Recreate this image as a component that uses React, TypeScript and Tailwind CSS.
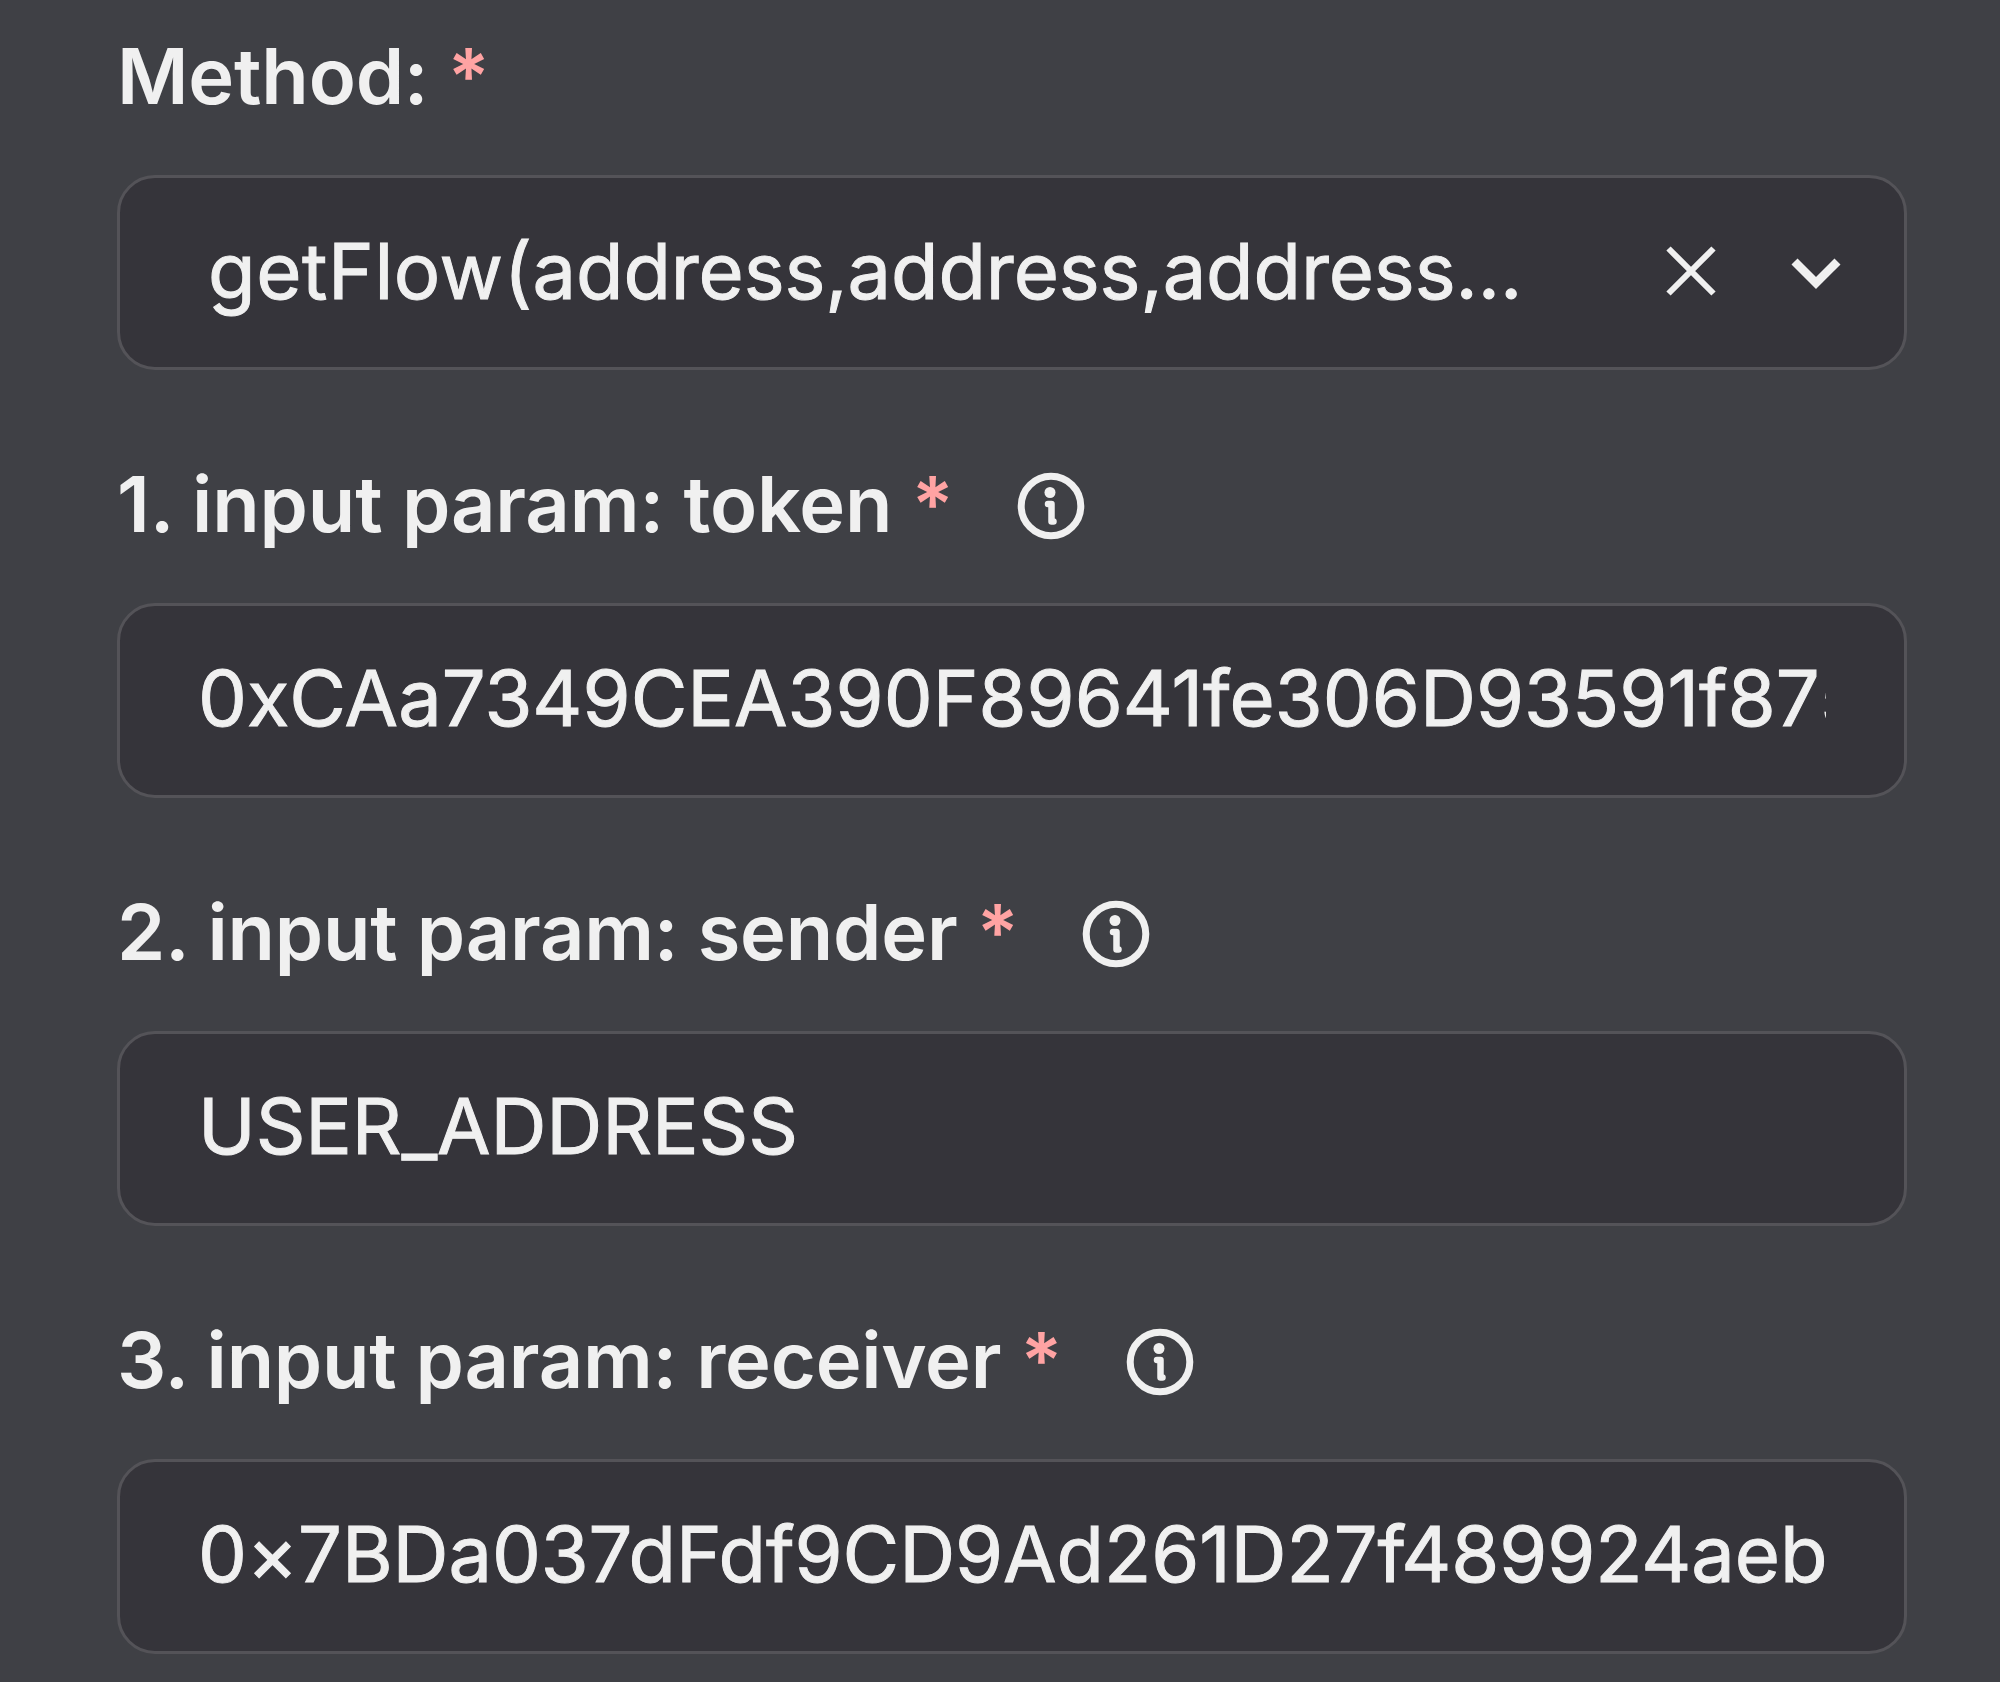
import React from "react";

function InfoIcon() {
  return (
    <svg
      className="mt-[3px] ml-[63.5px] size-[68px] shrink-0"
      viewBox="0 0 68 68"
      fill="none"
      stroke="currentColor"
      strokeLinecap="round"
      strokeLinejoin="round"
    >
      <circle cx="34" cy="34" r="29.800" strokeWidth="7" />
      <circle cx="33" cy="20.500" r="5.500" fill="currentColor" stroke="none" />
      <path d="M31 32h3.500v17.500h2" strokeWidth="6.500" />
    </svg>
  );
}

function CloseIcon() {
  return (
    <svg className="size-[52px] shrink-0" viewBox="0 0 52 52" fill="none" stroke="currentColor" strokeWidth="6">
      <path d="M3.500 3.500l45 45M48.500 3.500l-45 45" />
    </svg>
  );
}

function ChevronIcon() {
  return (
    <svg className="ml-[73px] size-[52px] shrink-0" viewBox="0 0 52 52" fill="none" stroke="currentColor" strokeWidth="8.500">
      <path d="M4.500 16.500l21.500 21.500l21.500-21.500" />
    </svg>
  );
}

function Label({ text, info, spacing = "tracking-[-0.22px]" }: { text: string; info?: boolean; spacing?: string }) {
  return (
    <div className={`mb-[49px] flex h-[100px] items-center text-[77.6px] leading-[100px] font-semibold ${spacing}`}>
      <span className="whitespace-pre">{text} </span>
      <span className="text-[#ffa3a3]">*</span>
      {info && <InfoIcon />}
    </div>
  );
}

function Field({ text, spacing = "tracking-[0.03px]" }: { text: string; spacing?: string }) {
  return (
    <div
      className={`mb-[84px] flex h-[195px] items-center rounded-[38px] border-[3px] border-[#545358] bg-[#35343a] px-[78px] pb-[5px] text-[77.6px] leading-[110px] ${spacing}`}
    >
      <div className="w-full overflow-hidden whitespace-nowrap [-webkit-text-stroke:1px_currentColor]">{text}</div>
    </div>
  );
}

function Select({ name, args }: { name: string; args: string }) {
  return (
    <div className="mb-[84px] flex h-[195px] items-center rounded-[38px] border-[3px] border-[#545358] bg-[#35343a] pr-[62px] pb-[4px] pl-[88px] text-[77.6px] leading-[110px]">
      <div className="flex-1 overflow-hidden tracking-[-0.12px] whitespace-nowrap [-webkit-text-stroke:1px_currentColor]">
        <span className="tracking-[0.6px]">{name}</span>
        {args}
      </div>
      <CloseIcon />
      <ChevronIcon />
    </div>
  );
}

export default function App() {
  return (
    <main className="h-[1682px] w-[2000px] overflow-hidden bg-[#3f4045] pt-[26px] pr-[93px] pl-[117px] font-['Inter',sans-serif] text-[#f0f0f0]">
      <Label text="Method:" />
      <Select name="getFlow(" args="address,address,address..." />
      <Label text="1. input param: token" info spacing="tracking-[-0.14px]" />
      <Field text="0xCAa7349CEA390F89641fe306D93591f875" />
      <Label text="2. input param: sender" info />
      <Field text="USER_ADDRESS" spacing="tracking-[-0.1px]" />
      <Label text="3. input param: receiver" info spacing="tracking-[-0.27px]" />
      <Field text="0×7BDa037dFdf9CD9Ad261D27f489924aeb" spacing="tracking-[-0.1px]" />
    </main>
  );
}
